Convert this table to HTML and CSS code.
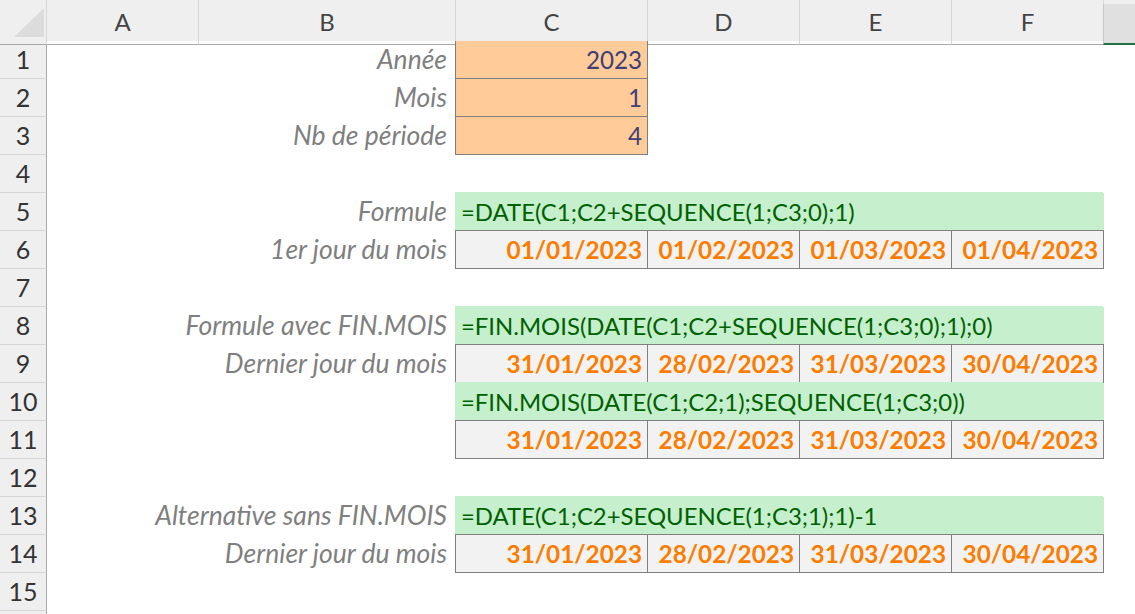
FILE: index.html
```html
<!DOCTYPE html>
<html lang="fr">
<head>
<meta charset="utf-8">
<title>Feuille</title>
<link rel="stylesheet" href="styles.css">
</head>
<body>
<div class="sheet">
  <div class="row head">
    <div class="corner"><svg class="tri" width="30" height="29" viewBox="0 0 30 29"><polygon points="0,29 30,29 30,0" fill="#dcdcdc"/></svg></div>
    <div class="ch">A</div>
    <div class="ch">B</div>
    <div class="ch">C</div>
    <div class="ch">D</div>
    <div class="ch">E</div>
    <div class="ch">F</div>
    <div class="ch sel"></div>
  </div>

  <div class="row">
    <div class="rh">1</div><div class="cell"></div>
    <div class="cell label">Année</div>
    <div class="cell input">2023</div>
    <div class="cell"></div><div class="cell"></div><div class="cell"></div><div class="cell"></div>
  </div>
  <div class="row">
    <div class="rh">2</div><div class="cell"></div>
    <div class="cell label">Mois</div>
    <div class="cell input">1</div>
    <div class="cell"></div><div class="cell"></div><div class="cell"></div><div class="cell"></div>
  </div>
  <div class="row">
    <div class="rh">3</div><div class="cell"></div>
    <div class="cell label">Nb de période</div>
    <div class="cell input">4</div>
    <div class="cell"></div><div class="cell"></div><div class="cell"></div><div class="cell"></div>
  </div>
  <div class="row">
    <div class="rh">4</div>
  </div>
  <div class="row">
    <div class="rh">5</div><div class="cell"></div>
    <div class="cell label">Formule</div>
    <div class="cell formula">=DATE(C1;C2+SEQUENCE(1;C3;0);1)</div>
  </div>
  <div class="row">
    <div class="rh">6</div><div class="cell"></div>
    <div class="cell label">1er jour du mois</div>
    <div class="cell calc first">01/01/2023</div>
    <div class="cell calc">01/02/2023</div>
    <div class="cell calc">01/03/2023</div>
    <div class="cell calc">01/04/2023</div>
  </div>
  <div class="row">
    <div class="rh">7</div>
  </div>
  <div class="row">
    <div class="rh">8</div><div class="cell"></div>
    <div class="cell label">Formule avec FIN.MOIS</div>
    <div class="cell formula">=FIN.MOIS(DATE(C1;C2+SEQUENCE(1;C3;0);1);0)</div>
  </div>
  <div class="row">
    <div class="rh">9</div><div class="cell"></div>
    <div class="cell label">Dernier jour du mois</div>
    <div class="cell calc first">31/01/2023</div>
    <div class="cell calc">28/02/2023</div>
    <div class="cell calc">31/03/2023</div>
    <div class="cell calc">30/04/2023</div>
  </div>
  <div class="row">
    <div class="rh">10</div><div class="cell"></div>
    <div class="cell label"></div>
    <div class="cell formula">=FIN.MOIS(DATE(C1;C2;1);SEQUENCE(1;C3;0))</div>
  </div>
  <div class="row">
    <div class="rh">11</div><div class="cell"></div>
    <div class="cell label"></div>
    <div class="cell calc first">31/01/2023</div>
    <div class="cell calc">28/02/2023</div>
    <div class="cell calc">31/03/2023</div>
    <div class="cell calc">30/04/2023</div>
  </div>
  <div class="row">
    <div class="rh">12</div>
  </div>
  <div class="row">
    <div class="rh">13</div><div class="cell"></div>
    <div class="cell label">Alternative sans FIN.MOIS</div>
    <div class="cell formula">=DATE(C1;C2+SEQUENCE(1;C3;1);1)-1</div>
  </div>
  <div class="row">
    <div class="rh">14</div><div class="cell"></div>
    <div class="cell label">Dernier jour du mois</div>
    <div class="cell calc first">31/01/2023</div>
    <div class="cell calc">28/02/2023</div>
    <div class="cell calc">31/03/2023</div>
    <div class="cell calc">30/04/2023</div>
  </div>
  <div class="row">
    <div class="rh">15</div>
  </div>
  <div class="row">
    <div class="rh"></div>
  </div>
</div>
</body>
</html>
```

FILE: styles.css
```css
html, body {
  margin: 0;
  padding: 0;
  background: #ffffff;
  overflow: hidden;
}

.sheet {
  width: 1135px;
  height: 614px;
  overflow: hidden;
  font-family: "Lato", "Open Sans", sans-serif;
}

.row {
  display: grid;
  grid-template-columns: 47px 152px 257px 192px 152px 152px 152px 1fr;
  height: 38px;
}

.row.head {
  height: 41px;
  background: #efefef;
}

.corner {
  box-sizing: border-box;
  border-right: 1px solid #d6d6d6;
  border-bottom: 1px solid #a8a8a8;
  position: relative;
}

.tri {
  position: absolute;
  left: 14px;
  top: 8px;
}

.ch {
  box-sizing: border-box;
  border-right: 1px solid #d6d6d6;
  border-bottom: 1px solid #a8a8a8;
  text-align: center;
  font-size: 24px;
  line-height: 44px;
  color: #444444;
}

.ch.sel {
  margin-top: 4px;
  background: #e0e0e0;
  border-left: 1px solid #c8c8c8;
  border-right: none;
  border-bottom: 2px solid #217346;
  margin-left: -1px;
}

.rh {
  box-sizing: border-box;
  background: #efefef;
  border-right: 1px solid #a8a8a8;
  border-bottom: 1px solid #d6d6d6;
  text-align: center;
  font-size: 25px;
  line-height: 37px;
  color: #333333;
}

.cell {
  box-sizing: border-box;
  font-size: 24.2px;
  line-height: 37px;
  white-space: nowrap;
}

.label {
  display: flex;
  justify-content: flex-end;
  padding-right: 9px;
  font-style: italic;
  font-size: 26.5px;
  color: #7f7f7f;
}

.input {
  background: #ffcc99;
  color: #3f3f76;
  text-align: right;
  padding-right: 5px;
  border-right: 1px solid #7f7f7f;
  border-bottom: 1px solid #7f7f7f;
  box-shadow: -1px 0 0 #7f7f7f;
}

.formula {
  grid-column: span 4;
  background: #c6efce;
  color: #006100;
  padding-left: 5px;
  font-size: 23.9px;
  box-shadow: -1px -1px 0 #c6efce;
}

.calc {
  background: #f2f2f2;
  color: #fa7d00;
  font-weight: bold;
  font-size: 24.3px;
  text-align: right;
  padding-right: 5px;
  border-right: 1px solid #7f7f7f;
  border-bottom: 1px solid #7f7f7f;
  box-shadow: 0 -1px 0 #7f7f7f;
}

.calc.first {
  box-shadow: -1px -1px 0 #7f7f7f, 0 -1px 0 #7f7f7f, -1px 0 0 #7f7f7f;
}
```
